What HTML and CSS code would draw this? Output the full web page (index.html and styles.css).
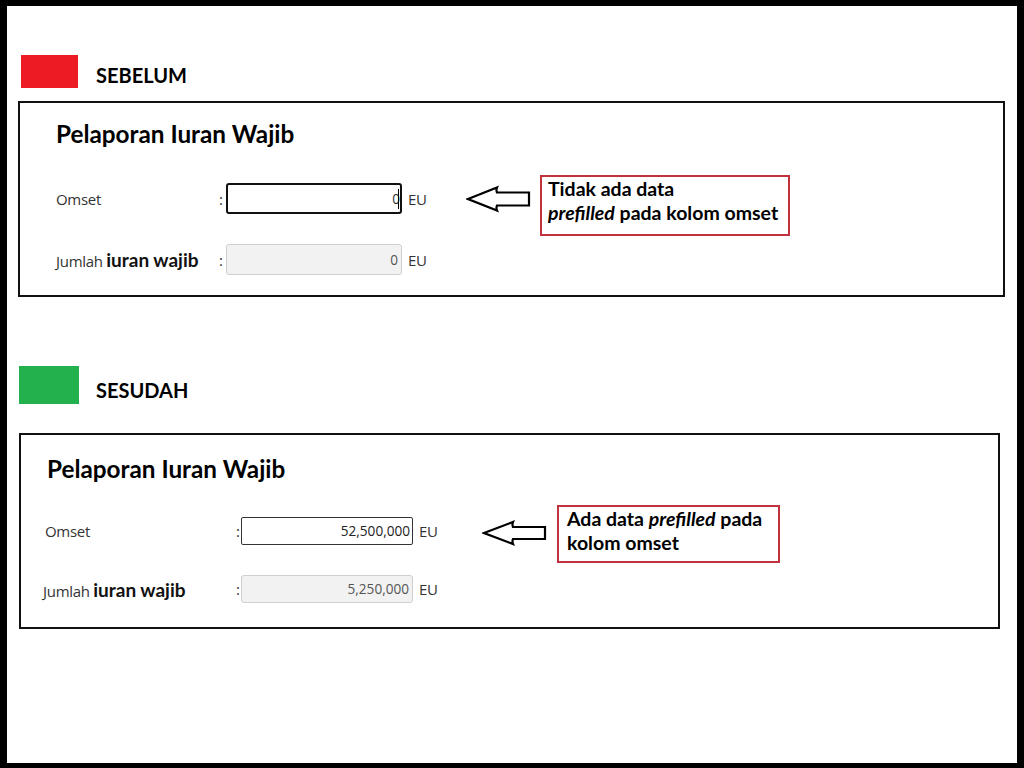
FILE: index.html
```html
<!DOCTYPE html>
<html lang="id">
<head>
<meta charset="utf-8">
<title>Pelaporan Iuran Wajib</title>
<link rel="stylesheet" href="styles.css">
</head>
<body>
<div class="frame">
  <section class="stage stage-before">
    <div class="tag">
      <span class="swatch swatch-red"></span>
      <h2 class="tag-title">SEBELUM</h2>
    </div>
    <div class="panel panel-before">
      <div class="form">
        <h1 class="form-title">Pelaporan Iuran Wajib</h1>
        <div class="row row-first">
          <span class="label">Omset</span>
          <span class="colon">:</span>
          <span class="field field-active"><span class="value">0</span><span class="caret"></span></span>
          <span class="unit">EU</span>
        </div>
        <div class="row">
          <span class="label">Jumlah <b>iuran wajib</b></span>
          <span class="colon">:</span>
          <span class="field field-readonly"><span class="value">0</span></span>
          <span class="unit">EU</span>
        </div>
      </div>
      <svg class="arrow" width="66" height="28" viewBox="0 0 66 28" aria-hidden="true">
        <path d="M2 14 L31 2.5 Q30 5 31 7.5 L63 7.5 L63 20.5 L31 20.5 Q30 23 31 25.5 Z" fill="#fff" stroke="#000" stroke-width="2.2" stroke-linejoin="miter"/>
      </svg>
      <div class="note">Tidak ada data<br><i>prefilled</i> pada kolom omset</div>
    </div>
  </section>

  <section class="stage stage-after">
    <div class="tag">
      <span class="swatch swatch-green"></span>
      <h2 class="tag-title">SESUDAH</h2>
    </div>
    <div class="panel panel-after">
      <div class="form">
        <h1 class="form-title">Pelaporan Iuran Wajib</h1>
        <div class="row row-first">
          <span class="label">Omset</span>
          <span class="colon">:</span>
          <span class="field field-filled"><span class="value">52,500,000</span></span>
          <span class="unit">EU</span>
        </div>
        <div class="row">
          <span class="label label-shift">Jumlah <b>iuran wajib</b></span>
          <span class="colon">:</span>
          <span class="field field-readonly"><span class="value">5,250,000</span></span>
          <span class="unit">EU</span>
        </div>
      </div>
      <svg class="arrow" width="66" height="26" viewBox="0 0 66 26" aria-hidden="true">
        <path d="M2 13 L31 2 Q30 4.5 31 7 L63 7 L63 19 L31 19 Q30 21.5 31 24 Z" fill="#fff" stroke="#000" stroke-width="2.2" stroke-linejoin="miter"/>
      </svg>
      <div class="note">Ada data <i>prefilled</i> pada<br>kolom omset</div>
    </div>
  </section>
</div>
</body>
</html>
```

FILE: styles.css
```css
* { box-sizing: border-box; }

html, body {
  margin: 0;
  padding: 0;
  background: #000;
}

.frame {
  width: 1024px;
  height: 768px;
  background: #fff;
  border-style: solid;
  border-color: #000;
  border-width: 6px 7px 5px 7px;
  font-family: "Open Sans", "Noto Sans", sans-serif;
  color: #333;
}

/* ---------- section headers ---------- */
.tag {
  display: flex;
  align-items: flex-start;
}

.swatch {
  display: block;
  flex: none;
}

.swatch-red {
  width: 57px;
  height: 33px;
  background: #ed1c24;
}

.swatch-green {
  width: 60px;
  height: 38px;
  background: #22b14c;
}

.tag-title {
  margin: 0;
  font-family: "Lato", "Open Sans", sans-serif;
  font-weight: 700;
  font-size: 20px;
  line-height: 24px;
  color: #000;
}

.stage-before .tag {
  margin: 49px 0 0 14px;
}
.stage-before .tag-title {
  margin: 8px 0 0 18px;
}

.stage-after .tag {
  margin: 69px 0 0 12px;
}
.stage-after .tag-title {
  margin: 12px 0 0 17px;
}

/* ---------- panel ---------- */
.panel {
  display: flex;
  align-items: flex-start;
  border: 2px solid #111;
}

.panel-before {
  margin: 13px 0 0 11px;
  width: 987px;
  height: 196px;
  padding: 16px 0 0 0;
}

.panel-after {
  margin: 29px 0 0 12px;
  width: 981px;
  height: 196px;
  padding: 19px 0 0 0;
}

.form {
  flex: none;
}

.form-title {
  margin: 0;
  font-family: "Lato", "Open Sans", sans-serif;
  font-weight: 700;
  font-size: 24.3px;
  line-height: 30px;
  color: #000;
}

.row {
  display: flex;
  align-items: center;
  font-size: 15px;
  color: #333;
}

.label {
  flex: none;
  letter-spacing: -0.3px;
}
.label b {
  font-family: "Lato", "Open Sans", sans-serif;
  font-weight: 700;
  font-size: 19px;
  color: #111;
  letter-spacing: 0;
}

.colon {
  flex: none;
  font-size: 15px;
}

.field {
  flex: none;
  display: flex;
  align-items: center;
  justify-content: flex-end;
  background: #fff;
  font-size: 13.6px;
  color: #333;
}

.value {
  line-height: 1;
}

.caret {
  display: block;
  width: 1px;
  height: 20px;
  background: #000;
  margin-left: -2px;
}

.unit {
  flex: none;
  margin-left: 6px;
  font-size: 15px;
  letter-spacing: -0.3px;
  color: #333;
}

/* panel before geometry */
.panel-before .form {
  width: 405px;
  padding-left: 36px;
}
.panel-before .row { height: 31px; margin-top: 30px; }
.panel-before .row-first { margin-top: 34px; }
.panel-before .label { width: 163px; }
.panel-before .colon { width: 7px; }
.panel-before .field { width: 176px; height: 31px; }

.field-active {
  border: 2px solid #111;
  border-radius: 3px;
  padding-right: 1px;
}

.field-readonly {
  background: #f2f2f2;
  border: 1px solid #cfcfcf;
  border-radius: 3px;
  padding-right: 3px;
  color: #555;
}

/* panel after geometry */
.panel-after .form {
  width: 415px;
  padding-left: 26px;
}
.panel-after .row { height: 28px; margin-top: 30px; margin-left: -2px; }
.panel-after .row-first { margin-top: 33px; }
.panel-after .label { width: 191px; }
.panel-after .label-shift { margin-left: -2px; width: 193px; }
.panel-after .colon { width: 5px; }
.panel-after .field { width: 172px; height: 28px; }

.field-filled {
  border: 1px solid #333;
  border-radius: 2px;
  padding-right: 2px;
  color: #222;
}

/* ---------- annotation ---------- */
.arrow {
  display: block;
  flex: none;
}

.note {
  flex: none;
  border: 2px solid #c1323c;
  font-family: "Lato", "Open Sans", sans-serif;
  font-weight: 700;
  font-size: 19.5px;
  line-height: 24px;
  color: #000;
  white-space: nowrap;
}
.note i {
  font-style: italic;
}

.panel-before .arrow {
  margin: 66px 0 0 41px;
}
.panel-before .note {
  width: 250px;
  height: 61px;
  margin: 56px 0 0 8px;
  padding: 0 0 0 6px;
}

.panel-after .arrow {
  margin: 66px 0 0 46px;
}
.panel-after .note {
  width: 223px;
  height: 58px;
  margin: 51px 0 0 9px;
  padding: 0 0 0 8px;
}
```
